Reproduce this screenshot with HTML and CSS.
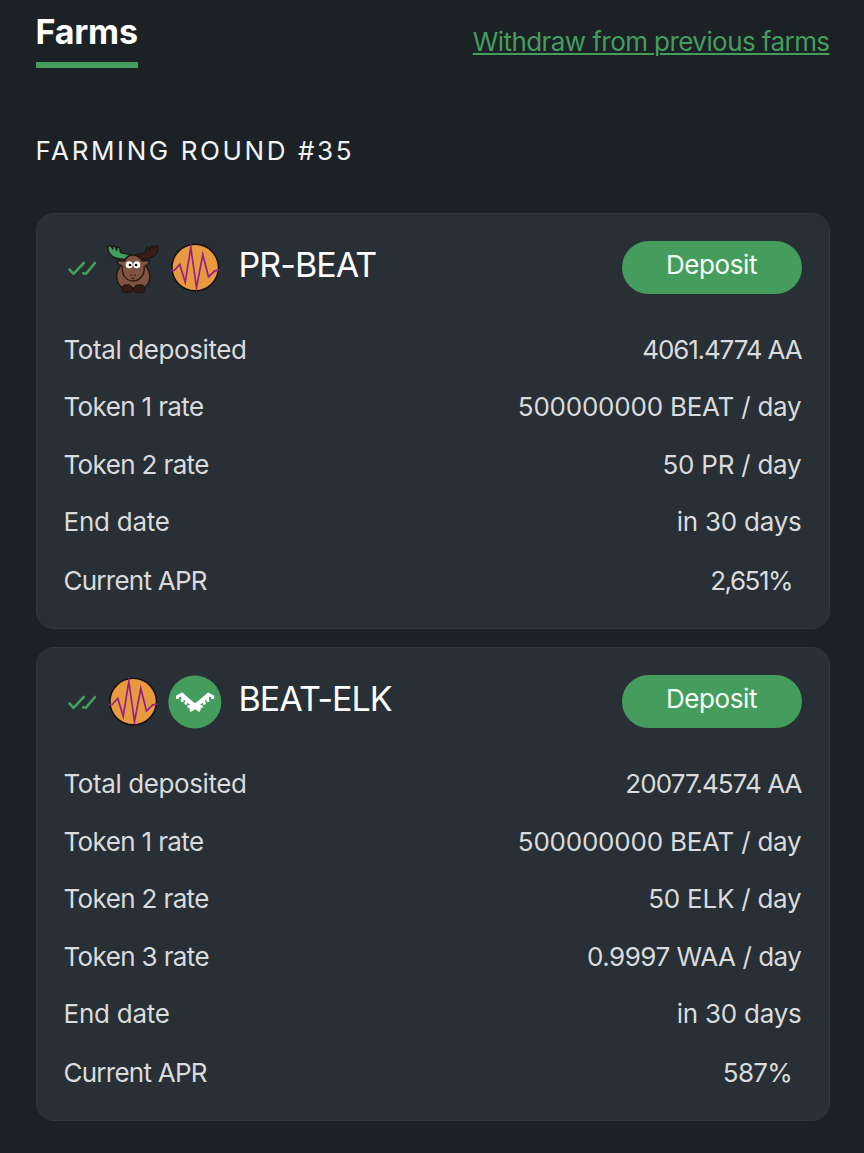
FILE: index.html
```
<!DOCTYPE html>
<html lang="en">
<head>
<meta charset="utf-8">
<title>Farms</title>
<link rel="stylesheet" href="styles.css">
</head>
<body>
<svg class="defs" width="0" height="0">
  <symbol id="checks" viewBox="0 0 30 18"><path d="M2.500 10.500 6.500 14.800 16.800 4M16.200 14.300 18.800 14.800 28 4" fill="none" stroke="#459d5d" stroke-width="2.600" stroke-linejoin="round" stroke-linecap="round"/></symbol>
  <symbol id="beat" viewBox="0 0 54 54"><circle cx="27.200" cy="26.600" r="23.300" fill="#ea9a3e" stroke="#17120f" stroke-width="1.600"/><path d="M2.800 29.500H6.200L11.800 23.500 17.200 41.200 22.800 6.500 28.500 46.500 34.800 13.500 40.500 35.800 46.800 29.800 51.500 29.200" fill="none" stroke="#93218c" stroke-width="1.700" stroke-miterlimit="10"/></symbol>
  <symbol id="moose" viewBox="0 0 54 54">
    <path d="M24 17.300C17 19 8 18 4.500 13.500 1.500 10 1.200 5.500 3.500 4.500 5 4.300 6 7 7 8.500 6.300 6 7 4.800 8 5 9.500 5.300 10 8 10.800 9.800 10.600 7 11.500 5.800 12.600 6.200 14 6.800 14 9.500 14.500 11.500 18 13 21 13 24 13.500Z" fill="#3f9f5c" stroke="#1d1714" stroke-width="1.300"/>
    <path d="M30 17.300C37 19 46 18 49.500 13.500 52.500 10 52.800 5.500 50.500 4.500 49 4.300 48 7 47 8.500 47.700 6 47 4.800 46 5 44.500 5.300 44 8 43.200 9.800 43.400 7 42.500 5.800 41.400 6.200 40 6.800 40 9.500 39.500 11.500 36 13 33 13 30 13.500Z" fill="#3a1c12" stroke="#1d1714" stroke-width="1.300"/>
    <path d="M27 14C23.500 14 20 16.500 18.500 20L11 19.500C11.500 22.500 13 24 15 24.500 8.500 32 9.500 43 17 47H37.500C45 43 46 32 39.500 24.500 41.500 24 43 22.500 43.500 19.500L36 20C34.500 16.500 30.500 14 27 14Z" fill="#805342" stroke="#211512" stroke-width="1.400"/>
    <path d="M16.500 25C15 33 20 40 27 40S39.500 33 38 25" fill="none" stroke="#2a1914" stroke-width="1.300"/>
    <path d="M16 50.500C14.500 46 17.500 43 21 44 24.500 43 27.500 46 26.500 50.500 23 52 19 52 16 50.500ZM38.500 50.500C40 46 37 43 33.500 44 30 43 27 46 28 50.500 31.500 52 35.500 52 38.500 50.500Z" fill="#351b13" stroke="#201310"/>
    <circle cx="23.200" cy="23.800" r="3.500" fill="#fff"/><circle cx="30.800" cy="23.800" r="3.500" fill="#fff"/>
    <circle cx="24" cy="24" r="1.300"/><circle cx="30" cy="24" r="1.300"/>
    <path d="M25 33.500V35M29 33.500V35M25.800 37.300Q27 38 28.200 37.300" fill="none" stroke="#24140f" stroke-width="1.300"/>
  </symbol>
  <symbol id="elk" viewBox="0 0 54 54">
    <circle cx="26.800" cy="27.100" r="26.500" fill="#459d5d"/>
    <g id="antler" fill="none" stroke="#fff">
      <path d="M13.500 19.500C17 23 23 28 32 34.500" stroke-width="4.200"/>
      <path d="M15 18.500 9.500 21.500V24M15 22 14 27M19 25 17.500 29.500M25 30 19.500 32M28 32 22 35.700" stroke-width="2.800"/>
    </g>
    <use href="#antler" transform="translate(54.200 0) scale(-1 1)"/>
  </symbol>
</svg>
<header class="top"><h1 class="tab">Farms</h1><a class="withdraw" href="#">Withdraw from previous farms</a></header>
<h2 class="round">FARMING ROUND #35</h2>
<main class="list">
  <section class="card">
    <div class="head"><svg class="checks"><use href="#checks"/></svg><svg class="token"><use href="#moose"/></svg><svg class="token"><use href="#beat"/></svg><h3 class="pair">PR-BEAT</h3><button class="deposit">Deposit</button></div>
    <dl class="rows">
      <div class="row total"><dt>Total deposited</dt><dd>4061.4774 AA</dd></div>
      <div class="row rate"><dt>Token 1 rate</dt><dd>500000000 BEAT / day</dd></div>
      <div class="row rate"><dt>Token 2 rate</dt><dd>50 PR / day</dd></div>
      <div class="row end"><dt>End date</dt><dd>in 30 days</dd></div>
      <div class="row apr"><dt>Current APR</dt><dd class="thousands">2,651%</dd></div>
    </dl>
  </section>
  <section class="card">
    <div class="head"><svg class="checks"><use href="#checks"/></svg><svg class="token"><use href="#beat"/></svg><svg class="token"><use href="#elk"/></svg><h3 class="pair">BEAT-ELK</h3><button class="deposit">Deposit</button></div>
    <dl class="rows">
      <div class="row total"><dt>Total deposited</dt><dd class="long">20077.4574 AA</dd></div>
      <div class="row rate"><dt>Token 1 rate</dt><dd>500000000 BEAT / day</dd></div>
      <div class="row rate"><dt>Token 2 rate</dt><dd>50 ELK / day</dd></div>
      <div class="row rate"><dt>Token 3 rate</dt><dd class="decimal">0.9997 WAA / day</dd></div>
      <div class="row end"><dt>End date</dt><dd>in 30 days</dd></div>
      <div class="row apr"><dt>Current APR</dt><dd>587%</dd></div>
    </dl>
  </section>
</main>
</body>
</html>
```

FILE: styles.css
```
* { box-sizing: border-box; }
body { margin: 0; padding: 0 34.5px 0 35.5px; min-height: 1153px; background: #1b2125; color: #d9dbdc; font: 400 26px/32px Inter, sans-serif; overflow: hidden; }
h1, h2, h3, dl, dd { margin: 0; font-weight: 400; }
.defs { position: absolute; }
.top { display: flex; justify-content: space-between; align-items: flex-start; height: 68px; }
.tab { height: 68px; padding-top: 11px; border-bottom: 6px solid #459d5d; color: #fff; font-size: 34px; font-weight: 700; line-height: 41px; letter-spacing: -0.2px; }
.withdraw { margin-top: 26px; color: #459d5d; letter-spacing: -0.57px; text-decoration-thickness: 2px; text-underline-offset: 2px; }
.round { margin-top: 67px; color: #f1f3f3; font-size: 26px; letter-spacing: 2.6px; }
.list { display: flex; flex-direction: column; gap: 18px; margin-top: 46px; }
.card { padding: 26.5px 27px 17.3px; border: 1.5px solid #30383a; border-radius: 18px; background: #282f35; }
.head { display: flex; align-items: center; height: 54px; padding-left: 3px; }
.checks { width: 30px; height: 18px; margin-right: 9px; }
.token { width: 54px; height: 54px; margin-right: 8px; }
.pair { margin: 0 0 6px 9px; color: #fff; font-size: 34px; line-height: 42px; letter-spacing: -0.95px; }
.deposit { width: 180px; height: 53px; margin-left: auto; padding: 0 0 6px; border: 0; border-radius: 27px; background: #459d5d; color: #f5fff7; font: inherit; letter-spacing: -0.4px; }
.rows { padding-top: 26.9px; }
.row { display: flex; justify-content: space-between; align-items: center; height: 57.4px; }
.total dt { letter-spacing: -0.4px; }
.total dd { letter-spacing: -1.15px; }
.total .long { letter-spacing: -0.95px; }
.rate dt { letter-spacing: -0.63px; }
.rate dd { letter-spacing: -0.23px; }
.rate .decimal { letter-spacing: -0.47px; }
.end { letter-spacing: -0.25px; }
.apr { height: 60px; padding-right: 9.5px; letter-spacing: -0.75px; }
.thousands { letter-spacing: -1.5px; }
```
